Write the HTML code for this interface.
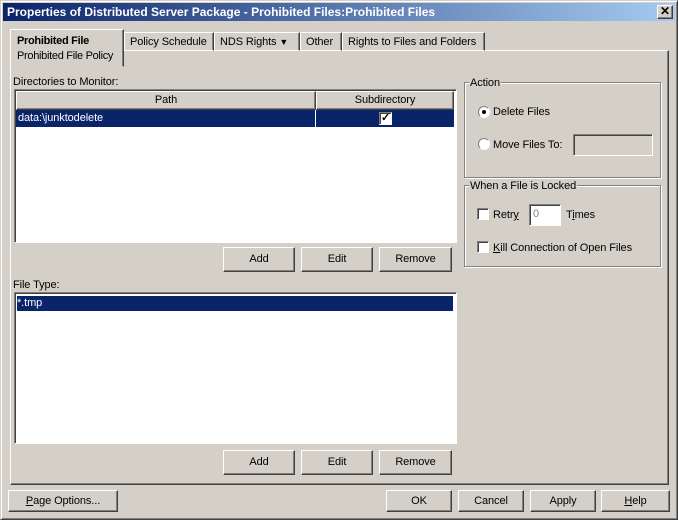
<!DOCTYPE html>
<html><head><style>
*{box-sizing:border-box;margin:0;padding:0}
body{width:678px;height:520px;background:#d4d0c8;font-family:"Liberation Sans",sans-serif;font-size:11px;letter-spacing:-0.1px;color:#000;position:relative;overflow:hidden}
.a{position:absolute}
.win{left:0;top:0;width:678px;height:520px;border:1px solid;border-color:#d4d0c8 #404040 #404040 #d4d0c8;box-shadow:inset 1px 1px #fff,inset -1px -1px #808080}
.title{left:3px;top:3px;width:672px;height:18px;background:linear-gradient(to right,#0a246a,#a6caf0);color:#fff;font-weight:bold;font-size:12px;letter-spacing:0;line-height:18px;padding-left:4px}
.btn{border:1px solid;border-color:#fff #404040 #404040 #fff;box-shadow:inset -1px -1px #808080;text-align:center;background:#d4d0c8}
.sunk{border:1px solid;border-color:#808080 #fff #fff #808080;box-shadow:inset 1px 1px #404040;background:#fff}
.tab{top:32px;height:19px;border:1px solid;border-color:#fff #404040 transparent #fff;box-shadow:inset -1px 0 #808080;padding:3px 5px 0;white-space:nowrap}
.grp{border:1px solid #808080;box-shadow:1px 1px #fff,inset 1px 1px #fff}
.lg{background:#d4d0c8;padding:0 1px}
.cb{width:12px;height:12px;background:#fff;border:1px solid;border-color:#808080 #fff #fff #808080;box-shadow:inset 1px 1px #404040}
.rd{width:12px;height:12px;border-radius:50%;background:#fff;border:1px solid;border-color:#808080 #fff #fff #808080}
.sel{background:#0a246a;color:#fff}
</style></head><body>
<div class="a win"></div>
<div class="a title">Properties of Distributed Server Package - Prohibited Files:Prohibited Files</div>
<div class="a btn" style="left:657px;top:5px;width:16px;height:14px;line-height:11px;font-weight:bold;font-size:12px">✕</div>

<div class="a" style="left:10px;top:50px;width:659px;height:435px;border:1px solid;border-color:#fff #404040 #404040 #fff;box-shadow:inset -1px -1px #808080"></div>
<div class="a tab" style="left:124px;width:90px">Policy Schedule</div>
<div class="a tab" style="left:214px;width:86px">NDS Rights <span style="font-size:9px">▼</span></div>
<div class="a tab" style="left:300px;width:42px">Other</div>
<div class="a tab" style="left:342px;width:143px">Rights to Files and Folders</div>
<div class="a" style="left:10px;top:29px;width:114px;height:38px;background:#d4d0c8;border:1px solid;border-color:#fff #404040 transparent #fff;box-shadow:inset -1px 0 #808080;padding:4px 0 0 6px;line-height:15px;white-space:nowrap;letter-spacing:-0.3px"><b>Prohibited File</b><br>Prohibited File Policy</div>
<div class="a" style="left:11px;top:66px;width:112px;height:2px;background:#d4d0c8"></div>

<div class="a" style="left:13px;top:76px">Directories to Monitor:</div>
<div class="a sunk" style="left:14px;top:89px;width:443px;height:154px"></div>
<div class="a btn" style="left:16px;top:91px;width:300px;height:19px;line-height:17px">Path</div>
<div class="a btn" style="left:316px;top:91px;width:138px;height:19px;line-height:17px">Subdirectory</div>
<div class="a sel" style="left:16px;top:110px;width:438px;height:17px;line-height:17px;padding-left:2px">data:\junktodelete</div>
<div class="a" style="left:315px;top:110px;width:1px;height:17px;background:#fff"></div>
<div class="a cb" style="left:379px;top:112px;width:13px;height:13px;font-size:11px;line-height:10px;text-align:center;font-weight:bold">✓</div>

<div class="a btn" style="left:223px;top:247px;width:72px;height:25px;line-height:23px">Add</div>
<div class="a btn" style="left:301px;top:247px;width:72px;height:25px;line-height:23px">Edit</div>
<div class="a btn" style="left:379px;top:247px;width:73px;height:25px;line-height:23px">Remove</div>

<div class="a" style="left:13px;top:279px">File Type:</div>
<div class="a sunk" style="left:14px;top:292px;width:443px;height:152px"></div>
<div class="a sel" style="left:17px;top:296px;width:436px;height:15px;line-height:15px">*.tmp</div>

<div class="a btn" style="left:223px;top:450px;width:72px;height:25px;line-height:23px">Add</div>
<div class="a btn" style="left:301px;top:450px;width:72px;height:25px;line-height:23px">Edit</div>
<div class="a btn" style="left:379px;top:450px;width:73px;height:25px;line-height:23px">Remove</div>

<div class="a grp" style="left:464px;top:82px;width:197px;height:96px"></div>
<div class="a lg" style="left:469px;top:77px">Action</div>
<div class="a rd" style="left:478px;top:106px"><div style="width:4px;height:4px;background:#000;border-radius:50%;margin:3px"></div></div>
<div class="a" style="left:493px;top:106px">Delete Files</div>
<div class="a rd" style="left:478px;top:138px"></div>
<div class="a" style="left:493px;top:139px">Move Files To:</div>
<div class="a" style="left:573px;top:134px;width:80px;height:22px;border:1px solid;border-color:#808080 #fff #fff #808080;box-shadow:inset 1px 1px #404040"></div>

<div class="a grp" style="left:464px;top:185px;width:197px;height:82px"></div>
<div class="a lg" style="left:469px;top:180px">When a File is Locked</div>
<div class="a cb" style="left:477px;top:208px"></div>
<div class="a" style="left:493px;top:209px">Retr<u>y</u></div>
<div class="a sunk" style="left:529px;top:204px;width:32px;height:22px;color:#808080;padding:3px 0 0 3px">0</div>
<div class="a" style="left:566px;top:209px">T<u>i</u>mes</div>
<div class="a cb" style="left:477px;top:241px"></div>
<div class="a" style="left:493px;top:242px"><u>K</u>ill Connection of Open Files</div>

<div class="a btn" style="left:8px;top:490px;width:110px;height:22px;line-height:20px"><u>P</u>age Options...</div>
<div class="a btn" style="left:386px;top:490px;width:66px;height:22px;line-height:20px">OK</div>
<div class="a btn" style="left:458px;top:490px;width:66px;height:22px;line-height:20px">Cancel</div>
<div class="a btn" style="left:530px;top:490px;width:66px;height:22px;line-height:20px">Apply</div>
<div class="a btn" style="left:601px;top:490px;width:69px;height:22px;line-height:20px"><u>H</u>elp</div>
</body></html>
